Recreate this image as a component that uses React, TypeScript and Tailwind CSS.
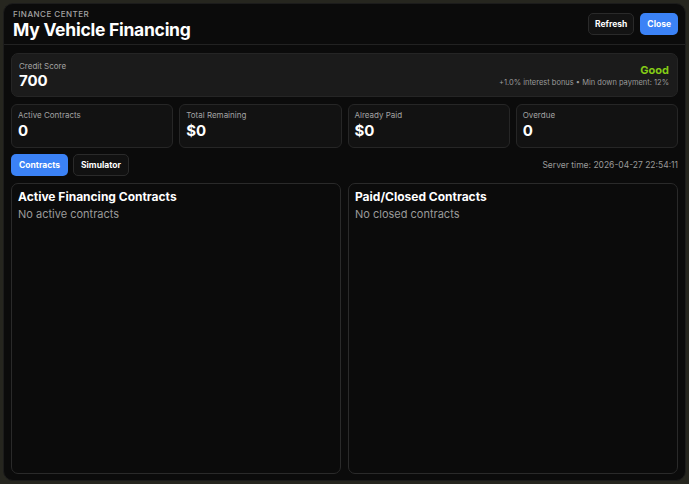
export default function App() {
  const stats = [
    { label: "Active Contracts", value: "0" },
    { label: "Total Remaining", value: "$0" },
    { label: "Already Paid", value: "$0" },
    { label: "Overdue", value: "0" },
  ];
  return (
    <div
      className="w-[689px] h-[484px] p-[3px] bg-[#26261f]"
      style={{ fontFamily: "Inter, 'Noto Sans', sans-serif" }}
    >
      <div className="w-full h-full rounded-[10px] bg-[#0b0b0b] border border-[#1c1c1c] flex flex-col overflow-hidden">
        <div className="flex items-center justify-between pl-[9px] pr-[7px] h-[41px] border-b border-[#222] shrink-0">
          <div className="flex flex-col pt-[2px]">
            <div className="text-[8px] leading-[10px] tracking-[0.06em] uppercase text-[#a3a3a3] font-medium">Finance Center</div>
            <div className="text-[17.5px] leading-[22px] font-bold text-white tracking-[-0.015em]">My Vehicle Financing</div>
          </div>
          <div className="flex gap-[6px]">
            <button className="h-[22px] px-[6px] rounded-[5px] border border-[#2a2a2a] bg-[#131313] text-white text-[8.5px] font-bold">Refresh</button>
            <button className="h-[22px] px-[7px] rounded-[5px] bg-[#3b82f6] text-white text-[8.5px] font-bold">Close</button>
          </div>
        </div>
        <div className="flex flex-col flex-1 px-[7px] pt-[8px] pb-[6px] min-h-0">
          <div className="flex items-center justify-between h-[44px] rounded-[7px] bg-[#1b1b1b] border border-[#252525] pl-[7px] pr-[8px] shrink-0">
            <div className="flex flex-col">
              <div className="text-[8px] leading-[10px] text-[#a3a3a3]">Credit Score</div>
              <div className="text-[15px] leading-[19px] font-bold text-white">700</div>
            </div>
            <div className="flex flex-col items-end">
              <div className="text-[11px] leading-[14px] font-bold text-[#84cc16]">Good</div>
              <div className="text-[7.5px] leading-[11px] text-[#9a9a9a]">+1.0% interest bonus • Min down payment: 12%</div>
            </div>
          </div>
          <div className="grid grid-cols-4 gap-[6px] shrink-0 mt-[7px]">
            {stats.map((s) => (
              <div key={s.label} className="h-[44px] rounded-[6px] bg-[#121212] border border-[#262626] px-[6px] pt-[5px] flex flex-col">
                <div className="text-[8px] leading-[10px] text-[#a3a3a3]">{s.label}</div>
                <div className="text-[15px] leading-[21px] font-bold text-white">{s.value}</div>
              </div>
            ))}
          </div>
          <div className="flex items-center justify-between shrink-0 mt-[6px]">
            <div className="flex gap-[5px]">
              <button className="h-[22px] px-[8px] rounded-[5px] bg-[#3b82f6] text-white text-[8.5px] font-bold">Contracts</button>
              <button className="h-[22px] px-[7px] rounded-[5px] bg-[#111] border border-[#2a2a2a] text-white text-[8.5px] font-bold">Simulator</button>
            </div>
            <div className="text-[8.5px] text-[#9a9a9a]">Server time: 2026-04-27 22:54:11</div>
          </div>
          <div className="grid grid-cols-2 gap-[7px] flex-1 min-h-0 mt-[7px]">
            <div className="rounded-[7px] border border-[#2a2a2a] bg-[#0b0b0b] px-[6px] pt-[5px]">
              <div className="text-[12px] leading-[16px] font-bold text-white">Active Financing Contracts</div>
              <div className="text-[11px] leading-[15px] mt-[2px] text-[#9a9a9a]">No active contracts</div>
            </div>
            <div className="rounded-[7px] border border-[#2a2a2a] bg-[#0b0b0b] px-[6px] pt-[5px]">
              <div className="text-[12px] leading-[16px] font-bold text-white">Paid/Closed Contracts</div>
              <div className="text-[11px] leading-[15px] mt-[2px] text-[#9a9a9a]">No closed contracts</div>
            </div>
          </div>
        </div>
      </div>
    </div>
  );
}
